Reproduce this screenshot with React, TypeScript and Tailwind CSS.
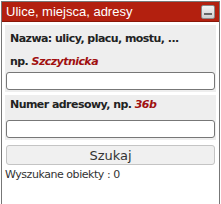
import React from "react";

export default function App() {
  return (
    <div className="w-[221px] h-[204px] bg-white overflow-hidden" style={{ fontFamily: "Tahoma, 'DejaVu Sans', sans-serif" }}>
      <div className="mt-px ml-px w-[219px] h-[203px] border-x border-t border-[#777] flex flex-col">
        <div className="h-[20px] bg-[#b3200f] border-b border-[#8a1608] flex items-center justify-between pl-[4px] pr-[4px]">
          <span className="text-white text-[13px] leading-none" style={{ fontFamily: "'Liberation Sans', Arial, sans-serif" }}>Ulice, miejsca, adresy</span>
          <div className="w-[14px] h-[14px] border border-[#888] rounded-[2px] bg-gradient-to-b from-[#f4f4f4] to-[#cfcfcf] flex items-end justify-center pb-[3px]">
            <div className="w-[8px] h-[2px] bg-[#666]"></div>
          </div>
        </div>
        <div className="px-[3px] pt-[3px] flex flex-col">
          <div className="bg-[#eeeeee] px-[1px] pt-[7px] pb-[2px] flex flex-col">
            <div className="px-[4px] text-[11px] font-bold text-[#222] leading-[14px]" style={{ fontFamily: "'DejaVu Sans', Verdana, sans-serif", letterSpacing: "-0.55px" }}>Nazwa: ulicy, placu, mostu, ...</div>
            <div className="px-[4px] mt-[9px] text-[11px] font-bold text-[#222] leading-[14px]" style={{ fontFamily: "'DejaVu Sans', Verdana, sans-serif", letterSpacing: "-0.55px" }}>np. <span className="italic text-[#a01010]">Szczytnicka</span></div>
            <div className="mt-[3px] h-[18px] bg-white border border-[#777] rounded-[3px]"></div>
          </div>
          <div className="h-[3px]"></div>
          <div className="bg-[#eeeeee] px-[1px] pt-[3px] pb-[2px] flex flex-col">
            <div className="px-[4px] text-[11px] font-bold text-[#222] leading-[14px]" style={{ fontFamily: "'DejaVu Sans', Verdana, sans-serif", letterSpacing: "-0.55px" }}>Numer adresowy, np. <span className="italic text-[#a01010]">36b</span></div>
            <div className="mt-[8px] h-[18px] bg-white border border-[#777] rounded-[3px]"></div>
          </div>
          <button className="mt-[5px] mx-[1px] h-[20px] bg-[#f0f0f0] border border-[#c4c4c4] rounded-[3px] text-[13px] text-[#333] leading-none">Szukaj</button>
          <div className="mt-[3px] text-[11px] text-[#333] leading-[14px]" style={{ letterSpacing: "-0.45px" }}>Wyszukane obiekty : 0</div>
        </div>
      </div>
    </div>
  );
}
